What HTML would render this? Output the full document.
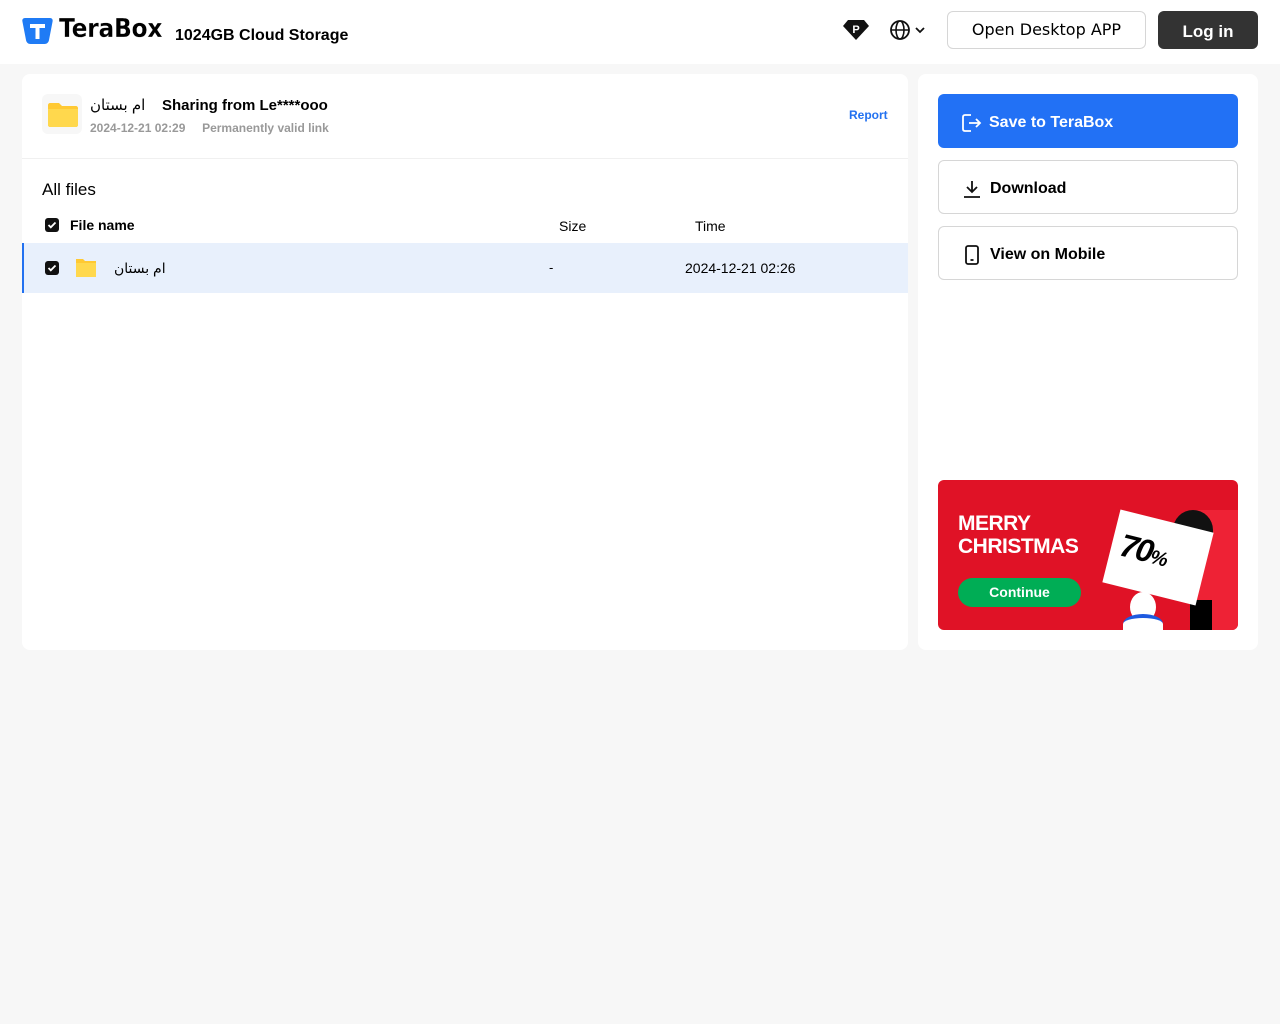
<!DOCTYPE html>
<html><head><meta charset="utf-8"><style>
*{margin:0;padding:0;box-sizing:border-box}
body{width:1280px;height:1024px;background:#f7f7f7;font-family:"Liberation Sans","DejaVu Sans",sans-serif;color:#000;position:relative;overflow:hidden}
.hdr{position:absolute;left:0;top:0;width:1280px;height:64px;background:#fff}
.abs{position:absolute}
.card{position:absolute;background:#fff;border-radius:8px}
.btn{position:absolute;left:20px;width:300px;height:54px;border-radius:6px;display:flex;align-items:center;padding-left:22px;padding-top:3px;font-weight:bold;font-size:16px}
.cb{position:absolute;width:14px;height:14px;background:#111;border-radius:3px}
.cb svg{position:absolute;left:2px;top:2px}
</style></head><body>
<div class="hdr">
  <svg class="abs" style="left:22px;top:16px" width="31" height="28" viewBox="0 0 31 28"><path d="M3 2h25c2 0 3 1.5 2.6 3.4L27 24c-.4 2.3-2 4-4.5 4H8.5C6 28 4.4 26.3 4 24L.4 5.4C0 3.5 1 2 3 2z" fill="#1f7bf5"/><path d="M8 8h15v4h-5.5v11h-4V12H8z" fill="#fff"/></svg>
  <div class="abs" style="left:59px;top:14px;font-size:26px;font-weight:bold;letter-spacing:-0.3px;font-family:'DejaVu Sans',sans-serif;transform:scaleX(0.9);transform-origin:left;-webkit-text-stroke:0.2px #fff">TeraBox</div>
  <div class="abs" style="left:175px;top:27px;font-size:16px;font-weight:bold">1024GB Cloud Storage</div>
  <svg class="abs" style="left:842px;top:19px" width="28" height="22" viewBox="0 0 28 22"><path d="M6 1h16l5 6-13 14L1 7z" fill="#111"/><text x="14" y="14" font-size="11" font-weight="bold" fill="#fff" text-anchor="middle" font-family="Liberation Sans">P</text></svg>
  <svg class="abs" style="left:889px;top:19px" width="40" height="22" viewBox="0 0 40 22"><circle cx="11" cy="11" r="9" fill="none" stroke="#111" stroke-width="1.8"/><ellipse cx="11" cy="11" rx="4" ry="9" fill="none" stroke="#111" stroke-width="1.6"/><path d="M2 11h18" stroke="#111" stroke-width="1.6"/><path d="M27 9l4 4 4-4" fill="none" stroke="#111" stroke-width="1.8"/></svg>
  <div class="abs" style="left:947px;top:11px;width:199px;height:38px;border:1px solid #d6d6d6;border-radius:6px;font-family:'DejaVu Sans',sans-serif;font-size:16px;text-align:center;line-height:36px">Open Desktop APP</div>
  <div class="abs" style="left:1158px;top:11px;width:100px;height:38px;background:#333;border-radius:6px;color:#fff;font-weight:bold;font-size:17px;text-align:center;line-height:42px">Log in</div>
</div>

<div class="card" style="left:22px;top:74px;width:886px;height:576px">
  <div class="abs" style="left:20px;top:20px;width:40px;height:40px;background:#f7f7f7;border-radius:6px"></div>
  <svg class="abs" style="left:26px;top:27px" width="30" height="26" viewBox="0 0 30 26"><path d="M2 2h9l3 3h14c1 0 2 1 2 2v17c0 1-1 2-2 2H2c-1 0-2-1-2-2V4c0-1 1-2 2-2z" fill="#ffc933"/><path d="M0 8h30v16c0 1-1 2-2 2H2c-1 0-2-1-2-2z" fill="#ffd84d"/></svg>
  <div class="abs" style="left:68px;top:22px;font-size:15px" dir="rtl">ام بستان</div>
  <div class="abs" style="left:140px;top:23px;font-size:15px;font-weight:bold">Sharing from Le****ooo</div>
  <div class="abs" style="left:68px;top:47px;font-size:12px;color:#999;font-weight:bold">2024-12-21 02:29 &nbsp;&nbsp;&nbsp; Permanently valid link</div>
  <div class="abs" style="left:827px;top:34px;font-size:12px;color:#2271f0;font-weight:bold">Report</div>
  <div class="abs" style="left:0;top:84px;width:886px;height:1px;background:#f0f0f0"></div>
  <div class="abs" style="left:20px;top:106px;font-size:17px">All files</div>
  <div class="cb" style="left:23px;top:144px"><svg width="10" height="10" viewBox="0 0 10 10"><path d="M1.5 5l2.3 2.3L8.5 2.5" fill="none" stroke="#fff" stroke-width="1.8"/></svg></div>
  <div class="abs" style="left:48px;top:143px;font-size:14px;font-weight:bold">File name</div>
  <div class="abs" style="left:537px;top:144px;font-size:14px">Size</div>
  <div class="abs" style="left:673px;top:144px;font-size:14px">Time</div>
  <div class="abs" style="left:0;top:169px;width:886px;height:50px;background:#e8f0fc;border-left:2px solid #2271f0"></div>
  <div class="cb" style="left:23px;top:187px"><svg width="10" height="10" viewBox="0 0 10 10"><path d="M1.5 5l2.3 2.3L8.5 2.5" fill="none" stroke="#fff" stroke-width="1.8"/></svg></div>
  <svg class="abs" style="left:53px;top:184px" width="22" height="20" viewBox="0 0 22 20"><path d="M1 1h7l2 2h11v16H1z" fill="#ffc933"/><path d="M1 5h20v14H1z" fill="#ffd84d"/></svg>
  <div class="abs" style="left:92px;top:186px;font-size:14px" dir="rtl">ام بستان</div>
  <div class="abs" style="left:527px;top:186px;font-size:13px">-</div>
  <div class="abs" style="left:663px;top:186px;font-size:14px">2024-12-21 02:26</div>
</div>

<div class="card" style="left:918px;top:74px;width:340px;height:576px">
  <div class="btn" style="top:20px;background:#2271f5;color:#fff">
    <svg width="22" height="22" viewBox="0 0 22 22" style="margin-right:7px"><path d="M11 3H5c-1.5 0-2 .8-2 2v12c0 1.2.5 2 2 2h6" fill="none" stroke="#fff" stroke-width="1.8"/><path d="M9 11h11M16 7l4 4-4 4" fill="none" stroke="#fff" stroke-width="1.8"/></svg>Save to TeraBox</div>
  <div class="btn" style="top:86px;border:1px solid #d6d6d6">
    <svg width="22" height="22" viewBox="0 0 22 22" style="margin-right:7px"><path d="M11 3v11M6 9l5 5 5-5M3 19h16" fill="none" stroke="#111" stroke-width="1.8"/></svg>Download</div>
  <div class="btn" style="top:152px;border:1px solid #d6d6d6">
    <svg width="22" height="22" viewBox="0 0 22 22" style="margin-right:7px"><rect x="5" y="2" width="12" height="18" rx="2" fill="none" stroke="#111" stroke-width="1.8"/><path d="M9.5 16h3" stroke="#111" stroke-width="1.8"/></svg>View on Mobile</div>
  <div class="abs" style="left:20px;top:406px;width:300px;height:150px;background:#e01226;border-radius:6px;overflow:hidden">
    <div class="abs" style="left:20px;top:32px;color:#fff;font-weight:bold;font-size:21px;line-height:23px;letter-spacing:-0.5px">MERRY<br>CHRISTMAS</div>
    <div class="abs" style="left:20px;top:98px;width:123px;height:29px;background:#00ad55;border-radius:15px;color:#fff;font-weight:bold;font-size:14px;text-align:center;line-height:29px">Continue</div>
    <div class="abs" style="left:258px;top:30px;width:60px;height:120px;background:#ee2235"></div>
    <div class="abs" style="left:252px;top:120px;width:22px;height:40px;background:#000"></div>
    <div class="abs" style="left:235px;top:30px;width:40px;height:24px;background:#111;border-radius:20px 20px 0 0"></div>
    <div class="abs" style="left:172px;top:40px;width:96px;height:75px;background:#fff;transform:rotate(14deg)"></div>
    <div class="abs" style="left:182px;top:52px;font-weight:900;font-size:32px;font-style:italic;transform:rotate(14deg);letter-spacing:-2px">70<span style="font-size:20px">%</span></div>
    <div class="abs" style="left:192px;top:112px;width:26px;height:30px;background:#fff;border-radius:50%"></div>
    <div class="abs" style="left:185px;top:134px;width:40px;height:20px;background:#fff;border-radius:50% 50% 0 0;border-top:4px solid #1e5ae0"></div>
  </div>
</div>
</body></html>
